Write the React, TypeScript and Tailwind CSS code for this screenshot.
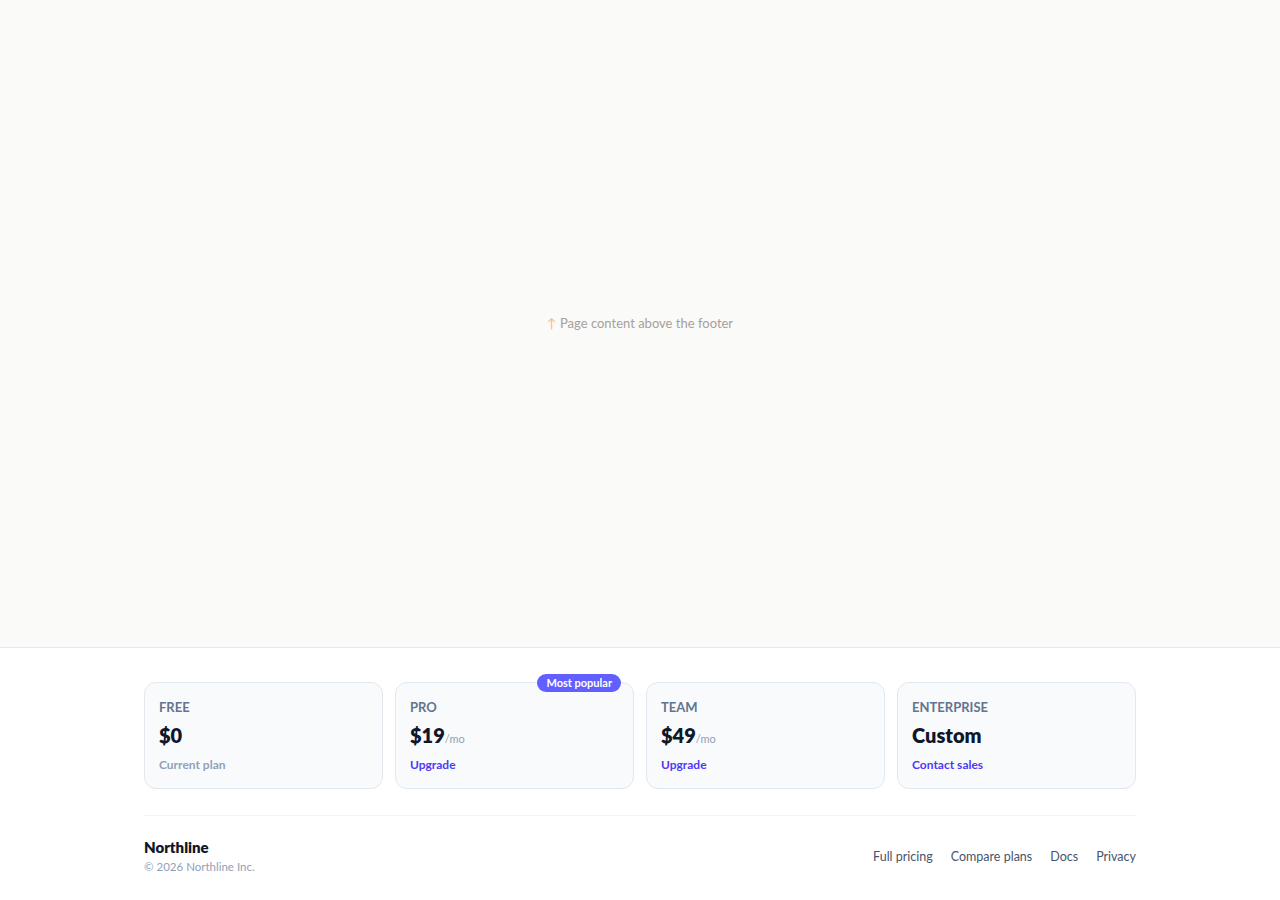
import React from 'react'

type Plan = {
  name: string
  price: string
  per?: string
  action: string
  current?: boolean
  popular?: boolean
}

const plans: Plan[] = [
  { name: 'FREE', price: '$0', action: 'Current plan', current: true },
  { name: 'PRO', price: '$19', per: '/mo', action: 'Upgrade', popular: true },
  { name: 'TEAM', price: '$49', per: '/mo', action: 'Upgrade' },
  { name: 'ENTERPRISE', price: 'Custom', action: 'Contact sales' },
]

const links = ['Full pricing', 'Compare plans', 'Docs', 'Privacy']

export default function App() {
  return (
    <div
      className="min-h-screen flex flex-col bg-[#fafaf9]"
      style={{ fontFamily: 'Lato, "Open Sans", sans-serif' }}
    >
      {/* page body placeholder */}
      <main className="flex-1 flex items-center justify-center">
        <p className="text-[13px] text-stone-400">
          <span className="text-orange-300">↑</span> Page content above the footer
        </p>
      </main>

      {/* ── Footer ─────────────────────────────── */}
      <footer className="bg-white border-t border-gray-200">
        <div className="max-w-5xl mx-auto px-4 pt-[34px] pb-[23px]">
          <div className="grid grid-cols-4 gap-3">
            {plans.map(p => (
              <div
                key={p.name}
                className="relative rounded-xl border border-slate-200 bg-slate-50 px-3.5 pt-3.5 pb-[15px]"
              >
                {p.popular && (
                  <span className="absolute -top-[9px] right-3 rounded-full bg-indigo-500 px-[9px] py-0.5 text-[11px] font-bold leading-[14px] text-white">
                    Most popular
                  </span>
                )}
                <div className="text-[13px] font-bold text-slate-500 leading-5">{p.name}</div>
                <div className="mt-1.5 flex items-baseline">
                  <span className="text-xl font-extrabold text-slate-900 leading-6">{p.price}</span>
                  {p.per && <span className="text-[11px] text-slate-400">{p.per}</span>}
                </div>
                <div
                  className={`mt-2.5 text-xs font-bold leading-4 ${
                    p.current ? 'text-slate-400' : 'text-indigo-600'
                  }`}
                >
                  {p.action}
                </div>
              </div>
            ))}
          </div>

          <div className="mt-[26px] border-t border-slate-100 pt-[21px] flex items-center justify-between">
            <div>
              <div className="text-[15px] font-extrabold text-slate-900 leading-5">Northline</div>
              <div className="text-[11.5px] text-slate-400 leading-5">© 2026 Northline Inc.</div>
            </div>
            <nav className="flex gap-[18px] text-[12.5px] text-slate-600">
              {links.map(l => (
                <a key={l} href="#">
                  {l}
                </a>
              ))}
            </nav>
          </div>
        </div>
      </footer>
    </div>
  )
}
